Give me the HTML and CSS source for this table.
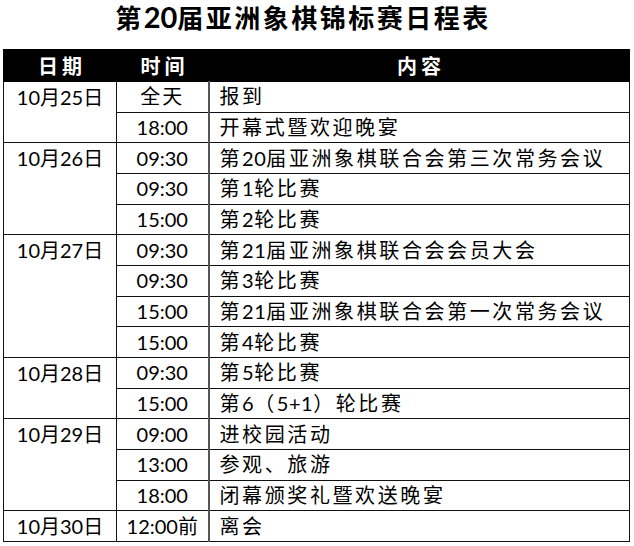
FILE: index.html
```html
<!DOCTYPE html>
<html lang="zh">
<head>
<meta charset="utf-8">
<link rel="stylesheet" href="styles.css">
</head>
<body>
<div class="title">第<span class="num">20</span>届亚洲象棋锦标赛日程表</div>
<table class="sched">
  <colgroup><col class="c1"><col class="c2"><col class="c3"></colgroup>
  <thead>
    <tr><th>日期</th><th>时间</th><th class="hc">内容</th></tr>
  </thead>
  <tbody>
    <tr><td class="date" rowspan="2">10月25日</td><td class="time sp">全天</td><td class="txt">报到</td></tr>
    <tr><td class="time">18:00</td><td class="txt">开幕式暨欢迎晚宴</td></tr>
    <tr><td class="date" rowspan="3">10月26日</td><td class="time">09:30</td><td class="txt">第<span class="n">20</span>届亚洲象棋联合会第三次常务会议</td></tr>
    <tr><td class="time">09:30</td><td class="txt">第<span class="n">1</span>轮比赛</td></tr>
    <tr><td class="time">15:00</td><td class="txt">第<span class="n">2</span>轮比赛</td></tr>
    <tr><td class="date" rowspan="4">10月27日</td><td class="time">09:30</td><td class="txt">第<span class="n">21</span>届亚洲象棋联合会会员大会</td></tr>
    <tr><td class="time">09:30</td><td class="txt">第<span class="n">3</span>轮比赛</td></tr>
    <tr><td class="time">15:00</td><td class="txt">第<span class="n">21</span>届亚洲象棋联合会第一次常务会议</td></tr>
    <tr><td class="time">15:00</td><td class="txt">第<span class="n">4</span>轮比赛</td></tr>
    <tr><td class="date" rowspan="2">10月28日</td><td class="time">09:30</td><td class="txt">第<span class="n">5</span>轮比赛</td></tr>
    <tr><td class="time">15:00</td><td class="txt">第<span class="n">6</span>（<span class="n">5+1</span>）轮比赛</td></tr>
    <tr><td class="date" rowspan="3">10月29日</td><td class="time">09:00</td><td class="txt">进校园活动</td></tr>
    <tr><td class="time">13:00</td><td class="txt">参观、旅游</td></tr>
    <tr><td class="time">18:00</td><td class="txt">闭幕颁奖礼暨欢送晚宴</td></tr>
    <tr><td class="date" rowspan="1">10月30日</td><td class="time">12:00前</td><td class="txt">离会</td></tr>
  </tbody>
</table>
</body>
</html>
```
FILE: styles.css
```css
html, body {
  margin: 0;
  padding: 0;
  background: #fff;
}
body {
  font-family: Lato, "Noto Sans CJK SC", sans-serif;
  color: #000;
}
.title {
  height: 49px;
  line-height: 34px;
  font-size: 26px;
  font-weight: 700;
  letter-spacing: 2.5px;
  text-align: center;
  padding-right: 28px;
  box-sizing: border-box;
}
.title .num {
  font-family: Lato, sans-serif;
  font-size: 29px;
  letter-spacing: 0;
}
.sched {
  margin-left: 3px;
  width: 626px;
  border-collapse: collapse;
  table-layout: fixed;
  font-size: 20px;
}
.c1 { width: 113px; }
.c2 { width: 92px; }
.c3 { width: 421px; }
.sched th {
  background: #000;
  color: #fff;
  font-weight: 700;
  height: 31px;
  padding: 0;
  line-height: 30px;
  letter-spacing: 4px;
  text-indent: 4px;
  border: 1px solid #000;
  border-left-color: #777;
}
.sched th:first-child { border-left-color: #000; }
.sched td {
  border: 1px solid #111;
  padding: 0;
  height: 30.67px;
  line-height: 29px;
  box-sizing: border-box;
}
.sched .date {
  vertical-align: top;
  text-align: center;
  padding-top: 1px;
  word-spacing: 0;
}
.sched .time {
  text-align: center;
}
.sched .time.sp { letter-spacing: 2px; }
.sched .txt {
  text-align: left;
  padding-left: 10px;
  letter-spacing: 2.6px;
  border-left: 2px solid #555;
  white-space: nowrap;
}
.sched .txt .n {
  letter-spacing: 0.5px;
}
```
